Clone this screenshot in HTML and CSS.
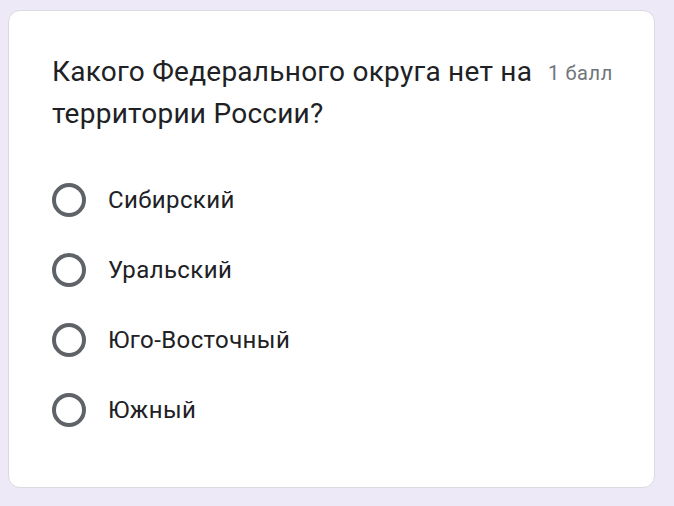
FILE: index.html
```html
<!DOCTYPE html>
<html lang="ru">
<head>
<meta charset="utf-8">
<link rel="stylesheet" href="styles.css">
</head>
<body>
<div class="card">
  <div class="title-row">
    <div class="title">Какого Федерального округа нет на территории России?</div>
    <div class="points">1 балл</div>
  </div>
  <div class="options">
    <div class="option"><span class="radio"></span><span class="label">Сибирский</span></div>
    <div class="option"><span class="radio"></span><span class="label">Уральский</span></div>
    <div class="option"><span class="radio"></span><span class="label">Юго-Восточный</span></div>
    <div class="option"><span class="radio"></span><span class="label">Южный</span></div>
  </div>
</div>
</body>
</html>
```
FILE: styles.css
```css
html, body {
  margin: 0;
  padding: 0;
}
body {
  background: #ede9f7;
  width: 674px;
  height: 506px;
  overflow: hidden;
  font-family: Roboto, "Noto Sans", sans-serif;
  padding: 10px 0 0 8px;
  box-sizing: border-box;
}
.card {
  width: 647px;
  height: 478px;
  box-sizing: border-box;
  background: #fff;
  border: 1px solid #dcdae0;
  border-radius: 12px;
  padding: 40px 0 0 43px;
}
.title-row {
  display: flex;
  align-items: flex-start;
}
.title {
  width: 490px;
  font-size: 28px;
  line-height: 42px;
  letter-spacing: 0.25px;
  color: #202124;
}
.points {
  margin-left: 6px;
  margin-top: 1px;
  font-size: 20px;
  line-height: 42px;
  letter-spacing: 0.6px;
  color: #70757a;
}
.options {
  margin-top: 48px;
  display: flex;
  flex-direction: column;
  gap: 36px;
}
.option {
  display: flex;
  align-items: center;
  height: 34px;
}
.radio {
  width: 34px;
  height: 34px;
  box-sizing: border-box;
  border: 4px solid #5f6368;
  border-radius: 50%;
  flex: none;
}
.label {
  margin-left: 22px;
  font-size: 24px;
  letter-spacing: 0.4px;
  color: #202124;
}
```
